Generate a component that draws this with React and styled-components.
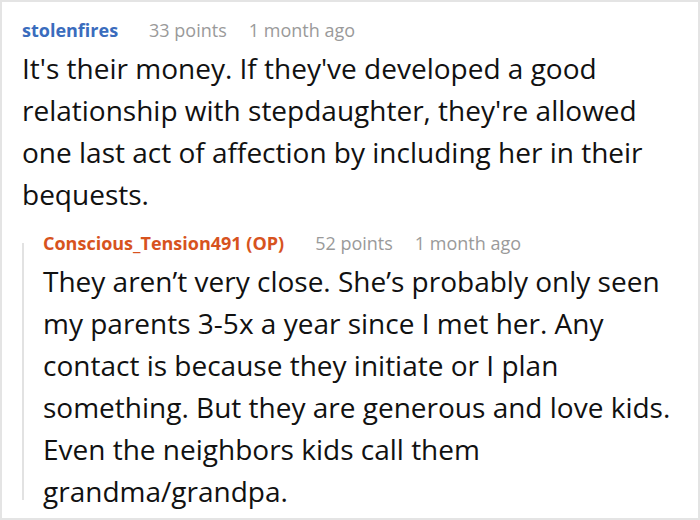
import React from "react";
import styled, { createGlobalStyle } from "styled-components";

const GlobalStyle = createGlobalStyle`
  html, body {
    margin: 0;
    padding: 0;
    background: #fff;
  }
`;

const comment = {
  author: "stolenfires",
  points: 33,
  time: "1 month ago",
  body: "It's their money. If they've developed a good relationship with stepdaughter, they're allowed one last act of affection by including her in their bequests.",
  reply: {
    author: "Conscious_Tension491 (OP)",
    points: 52,
    time: "1 month ago",
    body: "They aren\u2019t very close. She\u2019s probably only seen my parents 3-5x a year since I met her. Any contact is because they initiate or I plan something. But they are generous and love kids. Even the neighbors kids call them grandma/grandpa.",
  },
};

function App() {
  const { reply } = comment;
  return (
    <>
      <GlobalStyle />
      <Frame>
        <Meta>
          <Author>{comment.author}</Author>
          <Info>{comment.points} points</Info>
          <Info>{comment.time}</Info>
        </Meta>
        <Body>{comment.body}</Body>
        <Thread>
          <Meta>
            <Author op>{reply.author}</Author>
            <Info>{reply.points} points</Info>
            <Info>{reply.time}</Info>
          </Meta>
          <Body>{reply.body}</Body>
        </Thread>
      </Frame>
    </>
  );
}

export default App;

const Frame = styled.div`
  box-sizing: border-box;
  width: 700px;
  height: 520px;
  border: 2px solid #e4e4e4;
  padding: 15px 14px 0 20px;
  overflow: hidden;
  background: #fff;
  font-family: "Open Sans", "Noto Sans", sans-serif;
`;

const Meta = styled.div`
  display: flex;
  align-items: baseline;
  gap: 22px;
  font-size: 18px;
  line-height: 26px;
`;

const Author = styled.span`
  font-weight: 700;
  color: ${(p) => (p.op ? "#d7531e" : "#3a6cbd")};
  margin-right: 9px;
`;

const Info = styled.span`
  color: #9a9a9a;
`;

const Body = styled.p`
  margin: 4px 0 0;
  font-size: 28px;
  line-height: 42px;
  color: #111;
`;

const Thread = styled.div`
  position: relative;
  margin-top: 15px;
  padding-left: 21px;

  &::before {
    content: "";
    position: absolute;
    left: 0;
    top: 13px;
    bottom: 12px;
    width: 2px;
    background: #e2e2e2;
  }
`;
